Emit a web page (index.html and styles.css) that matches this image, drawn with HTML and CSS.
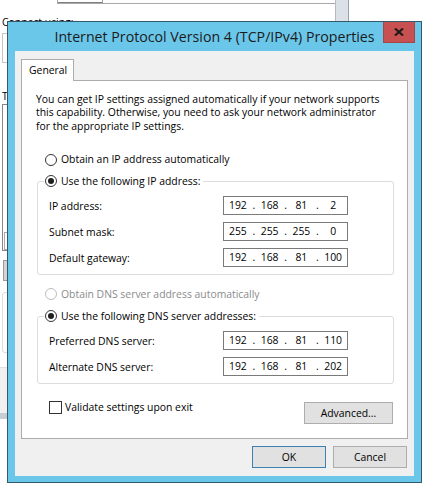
FILE: index.html
```html
<!DOCTYPE html>
<html lang="en">
<head>
<meta charset="utf-8">
<title>Internet Protocol Version 4 (TCP/IPv4) Properties</title>
<link rel="stylesheet" href="styles.css">
</head>
<body>
<div class="bg-top"><div class="bg-top-cell"></div></div>
<div class="bg-scroll"></div>
<div class="bg-left">
  <div class="bg-label">Connect using:</div>
  <div class="bg-combo"></div>
  <div class="bg-label bg-label2">T</div>
  <div class="bg-list"><div class="bg-list-item"></div></div>
  <div class="bg-button"></div>
  <div class="bg-group"></div>
  <div class="bg-panel"></div>
  <div class="bg-bar"></div>
</div>

<div class="dialog">
  <div class="titlebar">
    <span class="title">Internet Protocol Version 4 (TCP/IPv4) Properties</span>
    <div class="close">
      <svg width="10" height="8" viewBox="0 0 10 8"><path d="M1 0.5 L9 7.5 M9 0.5 L1 7.5" stroke="#1a1a1a" stroke-width="2.1" fill="none"/></svg>
    </div>
  </div>
  <div class="dlg-body">
    <div class="tabs"><div class="tab">General</div></div>
    <div class="panel">
      <div class="intro">
        <div class="intro-line">You can get IP settings assigned automatically if your network supports</div>
        <div class="intro-line">this capability. Otherwise, you need to ask your network administrator</div>
        <div class="intro-line">for the appropriate IP settings.</div>
      </div>

      <div class="radio-row first"><span class="radio"></span><span>Obtain an IP address automatically</span></div>

      <fieldset class="group">
        <legend class="legend"><span class="radio checked"></span><span>Use the following IP address:</span></legend>
        <div class="field-row"><span class="field-label">IP address:</span>
          <div class="ip"><span>192</span><span>.</span><span>168</span><span>.</span><span>81</span><span>.</span><span>2</span></div></div>
        <div class="field-row"><span class="field-label">Subnet mask:</span>
          <div class="ip"><span>255</span><span>.</span><span>255</span><span>.</span><span>255</span><span>.</span><span>0</span></div></div>
        <div class="field-row"><span class="field-label">Default gateway:</span>
          <div class="ip"><span>192</span><span>.</span><span>168</span><span>.</span><span>81</span><span>.</span><span>100</span></div></div>
      </fieldset>

      <div class="radio-row dns disabled"><span class="radio"></span><span>Obtain DNS server address automatically</span></div>

      <fieldset class="group group2">
        <legend class="legend"><span class="radio checked"></span><span>Use the following DNS server addresses:</span></legend>
        <div class="field-row"><span class="field-label">Preferred DNS server:</span>
          <div class="ip"><span>192</span><span>.</span><span>168</span><span>.</span><span>81</span><span>.</span><span>110</span></div></div>
        <div class="field-row"><span class="field-label">Alternate DNS server:</span>
          <div class="ip"><span>192</span><span>.</span><span>168</span><span>.</span><span>81</span><span>.</span><span>202</span></div></div>
      </fieldset>

      <div class="options">
        <div class="check-row"><span class="checkbox"></span><span>Validate settings upon exit</span></div>
        <div class="btn btn-advanced">Advanced...</div>
      </div>
    </div>
    <div class="actions">
      <div class="btn btn-default">OK</div>
      <div class="btn">Cancel</div>
    </div>
  </div>
</div>
</body>
</html>
```
FILE: styles.css
```css
* { box-sizing: border-box; }
html, body { margin: 0; padding: 0; }
body {
  width: 448px;
  height: 499px;
  overflow: hidden;
  position: relative;
  background: #ffffff;
  font-family: "Open Sans", "Noto Sans", sans-serif;
  font-size: 10.4px;
  color: #000;
}

/* background windows */
.bg-top {
  position: absolute;
  left: 57px;
  top: -40px;
  width: 279px;
  height: 44px;
  border: 1px solid #a9a9a9;
  display: flex;
}
.bg-top-cell { width: 45px; border-right: 1px solid #9c9c9c; border-bottom: 1px solid #808080; }
.bg-scroll {
  position: absolute;
  left: 335px;
  top: 0;
  width: 14px;
  height: 22px;
  background: #dbe1e6;
  border-left: 1px solid #b4bcc3;
  border-right: 1px solid #98a3ad;
}
.bg-left {
  position: absolute;
  left: 0;
  top: 0;
  width: 60px;
  padding-left: 2px;
  display: flex;
  flex-direction: column;
}
.bg-label { margin-top: 16px; height: 13px; line-height: 13px; white-space: nowrap; }
.bg-label2 { margin-top: 27px; }
.bg-combo { margin-top: 4px; height: 30px; border: 1px solid #c3c3c3; }
.bg-list {
  margin-top: 1px;
  height: 147px;
  border: 1px solid #828790;
  display: flex;
  flex-direction: column;
  justify-content: flex-end;
  padding-left: 1px;
}
.bg-list-item { height: 18px; border: 1px solid #a8a8a8; }
.bg-button { margin-top: 9px; margin-left: 1px; height: 21px; background: #d4d4d4; border: 1px solid #9a9a9a; }
.bg-group { margin-top: 11px; height: 61px; border: 1px solid #dcdcdc; border-radius: 3px; }
.bg-panel { margin-top: 14px; margin-left: -2px; height: 46px; background: #f0f0f0; border-top: 1px solid #e0e0e0; }
.bg-bar { margin-left: -2px; height: 6px; background: #c5ced5; }

/* dialog window */
.dialog {
  position: absolute;
  left: 7px;
  top: 21px;
  width: 415px;
  height: 462px;
  border: 1px solid #34596b;
  background: #6bc7ea;
  padding: 0 7px 6px 7px;
  display: flex;
  flex-direction: column;
}
.titlebar {
  height: 29px;
  position: relative;
  text-align: center;
  line-height: 29px;
  font-size: 14.2px;
  color: #1b1b1b;
  margin: 0 -7px;
}
.close {
  position: absolute;
  top: 0;
  right: 6px;
  width: 32px;
  height: 21px;
  background: #c75050;
  border: 1px solid #a84444;
  border-top: none;
  display: flex;
  align-items: center;
  justify-content: center;
}
.close svg { display: block; }

.dlg-body {
  flex: 1;
  background: #f0f0f0;
  padding: 8px 6px 0 6px;
  display: flex;
  flex-direction: column;
}
.tabs { display: flex; }
.tab {
  position: relative;
  z-index: 1;
  width: 53px;
  height: 22px;
  margin-bottom: -1px;
  border: 1px solid #acacac;
  border-bottom: none;
  background: #fff;
  padding-left: 7px;
  line-height: 20px;
}
.panel {
  height: 359px;
  border: 1px solid #acacac;
  background: #fff;
  display: flex;
  flex-direction: column;
}
.intro {
  margin: 11.5px 0 0 14px;
  white-space: nowrap;
}
.intro-line { height: 13.5px; line-height: 13.5px; }
.radio-row {
  margin: 20px 0 0 23px;
  height: 13px;
  line-height: 13px;
  display: flex;
  align-items: center;
  gap: 4px;
  white-space: nowrap;
}
.radio-row.dns { margin-top: 12.5px; }
.radio {
  width: 12px;
  height: 12px;
  flex: none;
  border: 1px solid #333;
  border-radius: 50%;
  background: #fff;
  display: flex;
  align-items: center;
  justify-content: center;
}
.radio.checked::after {
  content: "";
  width: 6px;
  height: 6px;
  border-radius: 50%;
  background: #1e1e1e;
}
.disabled { color: #8b8b8b; }
.disabled .radio { border-color: #bcbcbc; }

.group {
  margin: 8.5px 13px 0 15px;
  border: 1px solid #dcdcdc;
  border-radius: 3px;
  padding: 8.5px 0 7px 11px;
  min-width: 0;
  display: flex;
  flex-direction: column;
  gap: 7px;
}
.group2 { margin-top: 9px; }
.legend {
  padding: 0 3px 0 1px;
  margin-left: -5px;
  height: 13px;
  line-height: 13px;
  display: flex;
  align-items: center;
  gap: 4px;
  white-space: nowrap;
}
.field-row {
  display: flex;
  align-items: center;
  height: 19px;
}
.field-label { width: 174px; flex: none; white-space: nowrap; }
.ip {
  width: 125px;
  height: 19px;
  border: 1px solid #7a7a7a;
  background: #fff;
  display: grid;
  grid-template-columns: 1fr 4px 1fr 4px 1fr 4px 1fr;
  line-height: 17px;
  text-align: center;
}

.options {
  margin: 17px 14px 0 27px;
  display: flex;
  justify-content: space-between;
  align-items: flex-start;
}
.check-row {
  display: flex;
  align-items: center;
  gap: 3px;
  height: 13px;
  line-height: 13px;
}
.checkbox {
  width: 13px;
  height: 13px;
  border: 1px solid #333;
  background: #fff;
}
.btn {
  width: 74px;
  height: 22px;
  border: 1px solid #adadad;
  background: #e1e1e1;
  text-align: center;
  line-height: 20px;
}
.btn-advanced { width: 89px; margin-top: 1px; }
.btn-default { border-color: #3c7fb1; }
.actions {
  display: flex;
  justify-content: flex-end;
  gap: 7px;
  margin: 7px 1px 0 0;
}
```
